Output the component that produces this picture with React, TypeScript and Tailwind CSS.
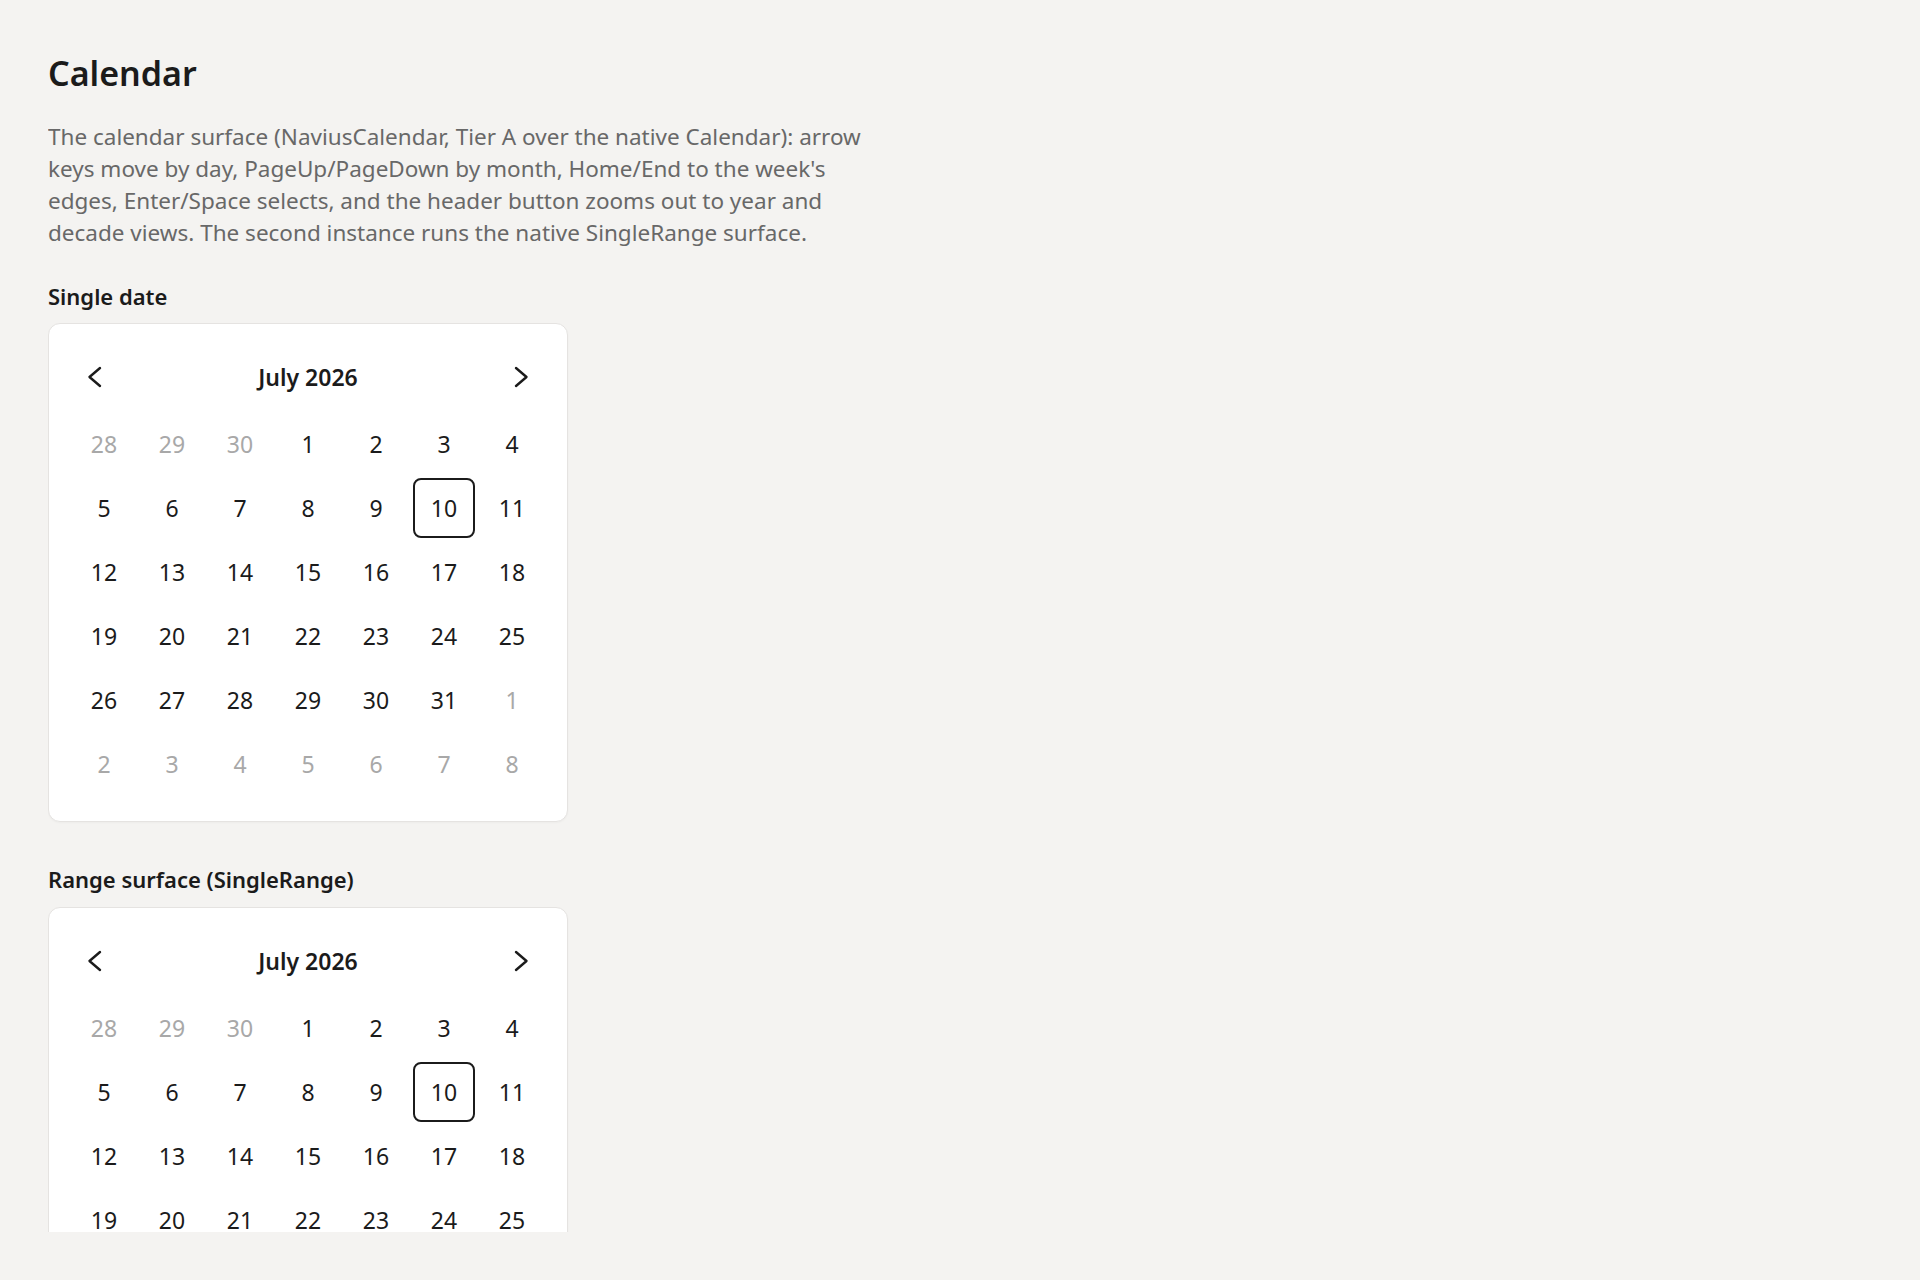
import * as React from "react";

type Day = { n: number; muted?: boolean; selected?: boolean };

// July 2026 grid, weeks starting on Sunday
const weeks: Day[][] = [
  [{ n: 28, muted: true }, { n: 29, muted: true }, { n: 30, muted: true }, { n: 1 }, { n: 2 }, { n: 3 }, { n: 4 }],
  [{ n: 5 }, { n: 6 }, { n: 7 }, { n: 8 }, { n: 9 }, { n: 10, selected: true }, { n: 11 }],
  [{ n: 12 }, { n: 13 }, { n: 14 }, { n: 15 }, { n: 16 }, { n: 17 }, { n: 18 }],
  [{ n: 19 }, { n: 20 }, { n: 21 }, { n: 22 }, { n: 23 }, { n: 24 }, { n: 25 }],
  [{ n: 26 }, { n: 27 }, { n: 28 }, { n: 29 }, { n: 30 }, { n: 31 }, { n: 1, muted: true }],
  [
    { n: 2, muted: true },
    { n: 3, muted: true },
    { n: 4, muted: true },
    { n: 5, muted: true },
    { n: 6, muted: true },
    { n: 7, muted: true },
    { n: 8, muted: true },
  ],
];

function Chevron({ dir }: { dir: "left" | "right" }) {
  return (
    <svg width="24" height="24" viewBox="0 0 24 24" fill="none" aria-hidden="true">
      <path
        d={dir === "left" ? "M17 3 L6.5 12 L17 21" : "M7 3 L17.5 12 L7 21"}
        stroke="#1b1b1b"
        strokeWidth="2.4"
        strokeLinecap="round"
        strokeLinejoin="round"
      />
    </svg>
  );
}

function CalendarCard() {
  return (
    <div className="w-[520px] rounded-xl border border-[#e5e3e1] bg-white px-6 pt-6 pb-[27px] shadow-[0_1px_2px_rgba(0,0,0,0.03)]">
      <div className="flex h-[58px] items-center justify-between">
        <button className="flex h-11 w-11 items-center justify-center rounded-md" aria-label="Previous month">
          <Chevron dir="left" />
        </button>
        <button className="text-[23px] font-semibold text-[#1b1b1b]">July 2026</button>
        <button className="flex h-11 w-11 items-center justify-center rounded-md" aria-label="Next month">
          <Chevron dir="right" />
        </button>
      </div>
      <div className="mt-2 grid grid-cols-[repeat(7,62px)] gap-x-[6px] gap-y-1">
        {weeks.flat().map((d, i) => (
          <div
            key={i}
            className={
              "flex h-[60px] items-center justify-center rounded-lg text-[23px] " +
              (d.muted ? "text-[#a8a8a8] " : "text-[#1b1b1b] ") +
              (d.selected ? "border-2 border-[#1b1b1b]" : "")
            }
          >
            {d.n}
          </div>
        ))}
      </div>
    </div>
  );
}

export default function App() {
  return (
    <div className="h-screen bg-[#f4f3f1] p-12 font-['Noto_Sans','Open_Sans',sans-serif]">
      <div className="h-full overflow-hidden">
        <h1 className="text-[34px] leading-[50px] font-semibold text-[#1b1b1b]">Calendar</h1>
        <p className="mt-[23px] max-w-[830px] text-[22.5px] leading-8 text-[#686868]">
          The calendar surface (NaviusCalendar, Tier A over the native Calendar): arrow keys move by day,
          PageUp/PageDown by month, Home/End to the week's edges, Enter/Space selects, and the header button
          zooms out to year and decade views. The second instance runs the native SingleRange surface.
        </p>

        <section className="mt-[31px]">
          <h2 className="mb-[11px] text-[22px] leading-8 font-semibold text-[#1b1b1b]">Single date</h2>
          <CalendarCard />
        </section>

        <section className="mt-[41px]">
          <h2 className="mb-3 text-[22px] leading-8 font-semibold text-[#1b1b1b]">Range surface (SingleRange)</h2>
          <CalendarCard />
        </section>
      </div>
    </div>
  );
}
